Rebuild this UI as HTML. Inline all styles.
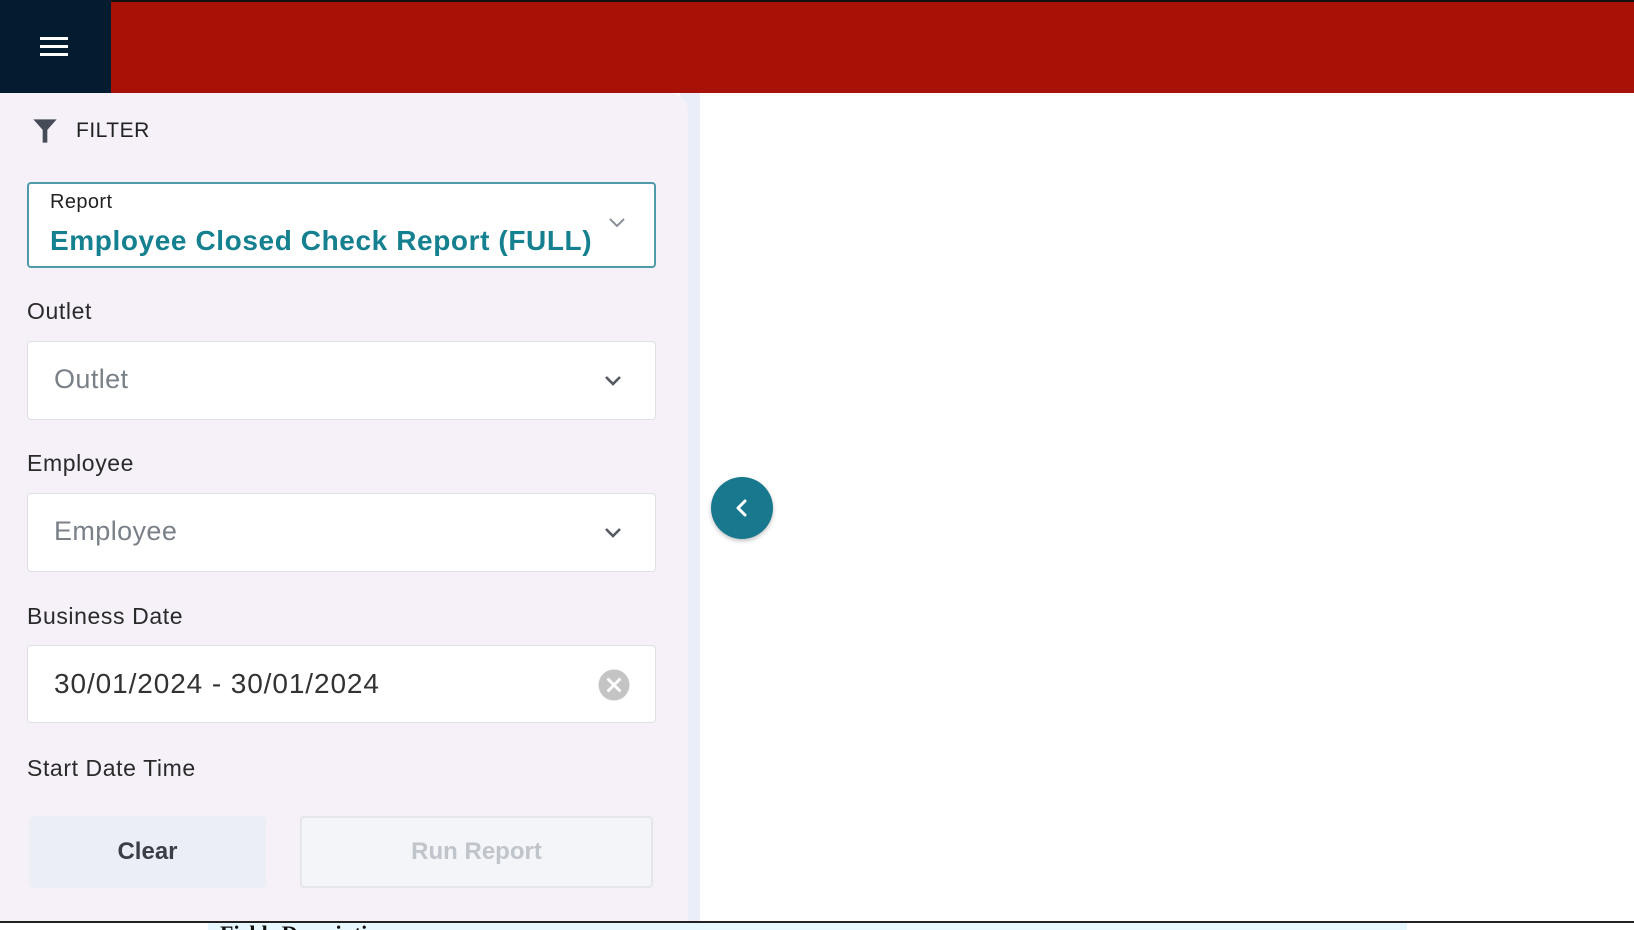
<!DOCTYPE html>
<html><head><meta charset="utf-8">
<style>
*{box-sizing:border-box;margin:0;padding:0}
body{width:1634px;height:930px;overflow:hidden;background:#fff;font-family:"Liberation Sans",sans-serif;position:relative}
.top{position:absolute;left:0;top:0;width:1634px;height:93px;background:#a81106;border-top:2px solid #111}
.menu{position:absolute;left:0;top:0;width:111px;height:93px;background:#041c30}
.menu span{position:absolute;left:40px;width:28px;height:3px;background:#fff}
.strip{position:absolute;left:680px;top:93px;width:20px;height:829px;background:#e9eef9}
.panel{position:absolute;left:0;top:93px;width:688px;height:829px;background:#f6f1f8;border-top-right-radius:18px}
.ft{position:absolute;left:76px;top:119px;font-size:21px;color:#222;letter-spacing:0.5px}
.lbl{position:absolute;left:27px;font-size:23px;color:#2a2a2a;letter-spacing:0.6px}
.box{position:absolute;left:27px;width:629px;background:#fff;border:1px solid #dedee4;border-radius:4px}
.ph{position:absolute;left:26px;font-size:27px;color:#7a8088;letter-spacing:0.4px}
.chev{position:absolute;right:32px}
.btn{position:absolute;top:816px;height:72px;border-radius:4px;font-size:24px;display:flex;align-items:center;justify-content:center;font-weight:bold}
.bottom{position:absolute;left:0;top:921px;width:1634px;height:9px;border-top:2px solid #222;background:#fff}
.cy{position:absolute;left:208px;top:923px;width:1199px;height:7px;background:#e6f7fd;overflow:hidden}
</style></head><body>
<div class="top"></div>
<div class="menu"><span style="top:37px"></span><span style="top:45px"></span><span style="top:53px"></span></div>
<div class="strip"></div>
<div class="panel"></div>
<svg style="position:absolute;left:31px;top:117px" width="28" height="28" viewBox="0 0 24 24"><path d="M2 2h20l-8 9v11h-4V11z" fill="#454c57"/></svg>
<div class="ft">FILTER</div>

<div class="box" style="top:182px;height:86px;border:2px solid #4f9aa8">
 <div style="position:absolute;left:21px;top:7px;font-size:20px;color:#222;letter-spacing:0.4px">Report</div>
 <div style="position:absolute;left:21px;top:41px;font-size:28px;font-weight:bold;color:#15808f;letter-spacing:0.6px">Employee Closed Check Report (FULL)</div>
 <svg style="position:absolute;right:28px;top:33px" width="18" height="12" viewBox="0 0 18 12"><path d="M2 2l7 7 7-7" stroke="#8a9099" stroke-width="2" fill="none"/></svg>
</div>

<div class="lbl" style="top:298px">Outlet</div>
<div class="box" style="top:341px;height:79px"><div class="ph" style="top:22px">Outlet</div>
<svg class="chev" style="top:32px" width="20" height="14" viewBox="0 0 20 14"><path d="M3 3l7 7 7-7" stroke="#555b63" stroke-width="2.6" fill="none"/></svg></div>

<div class="lbl" style="top:450px">Employee</div>
<div class="box" style="top:493px;height:79px"><div class="ph" style="top:22px">Employee</div>
<svg class="chev" style="top:32px" width="20" height="14" viewBox="0 0 20 14"><path d="M3 3l7 7 7-7" stroke="#555b63" stroke-width="2.6" fill="none"/></svg></div>

<div class="lbl" style="top:603px">Business Date</div>
<div class="box" style="top:645px;height:78px"><div class="ph" style="top:22px;color:#333;font-size:28px;letter-spacing:0.9px">30/01/2024 - 30/01/2024</div>
<svg style="position:absolute;right:25px;top:23px" width="32" height="32" viewBox="0 0 32 32"><circle cx="16" cy="16" r="15.5" fill="#c4c4c4"/><path d="M10.5 10.5l11 11M21.5 10.5l-11 11" stroke="#fff" stroke-width="3" stroke-linecap="round"/></svg></div>

<div class="lbl" style="top:755px">Start Date Time</div>

<div class="btn" style="left:29px;width:237px;background:#ebeff5;color:#3a3f47">Clear</div>
<div class="btn" style="left:300px;width:353px;background:#f4f5f8;border:2px solid #e4e6eb;color:#c0c4cb">Run Report</div>

<div style="position:absolute;left:711px;top:477px;width:62px;height:62px;border-radius:50%;background:#18798e;box-shadow:0 2px 4px rgba(0,0,0,.25)"></div>
<svg style="position:absolute;left:731px;top:497px" width="22" height="22" viewBox="0 0 22 22"><path d="M14 4l-7 7 7 7" stroke="#fff" stroke-width="3" fill="none" stroke-linecap="round" stroke-linejoin="round"/></svg>

<div class="bottom"></div>
<div class="cy"><div style="position:absolute;left:12px;top:-2px;font:bold 22px 'Liberation Serif',serif;color:#111">Fields Description</div></div>
</body></html>
